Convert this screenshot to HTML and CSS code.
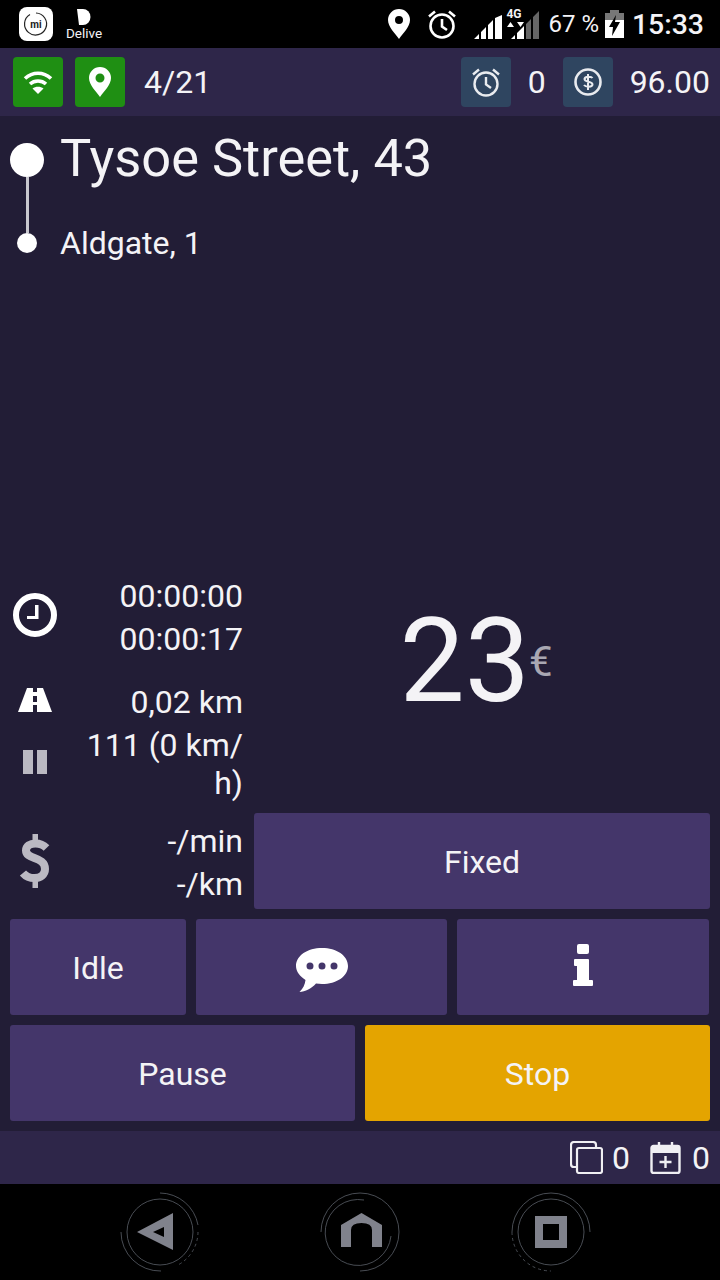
FILE: index.html
```html
<!DOCTYPE html>
<html>
<head>
    <meta charset="UTF-8">
    <title>Taximeter</title>
    <link rel="stylesheet" href="styles.css">
</head>
<body>
    <div class="phone">
        <div class="status-bar">
            <div class="status-left">
                <div class="mi-icon">
                    <svg width="28" height="28" viewBox="0 0 28 28"><path d="M8 4.500A11 11 0 1 0 14 3" fill="none" stroke="#222" stroke-width="1.200"/></svg>
                    <span class="mi-text">mi</span>
                </div>
                <div class="delive">
                    <svg width="14" height="16" viewBox="0 0 14 16"><path d="M0 0h6a7.500 8 0 0 1 0 16H2z" fill="#fff"/></svg>
                    <span>Delive</span>
                </div>
            </div>
            <div class="status-right">
                <svg class="st-pin" width="22" height="30" viewBox="0 0 22 30"><path fill-rule="evenodd" d="M11 0a11 11 0 0 1 11 11c0 7-7 13-11 19C7 24 0 18 0 11A11 11 0 0 1 11 0zm0 7a4 4 0 1 0 0 8 4 4 0 0 0 0-8z" fill="#fff"/></svg>
                <svg class="st-alarm" width="30" height="30" viewBox="0 0 30 30"><g fill="none" stroke="#fff" stroke-width="2.600"><circle cx="15" cy="17" r="11.500"/><path d="M15 10v7.500l5 3.500M2 7.500l6-5M28 7.500l-6-5"/></g></svg>
                <svg class="st-signal" width="28" height="24" viewBox="0 0 28 24"><path d="M0 24l5-5v5zM7 24v-7l5-5v12zM14 24V10l5-5v19zM21 24V3l7-3v24z" fill="#fff"/></svg>
                <div class="net">
                    <span class="net-text">4G</span>
                    <svg width="36" height="36" viewBox="0 0 36 36"><path d="M4 24l3.500-5 3.500 5zM14 19l3.500 5 3.500-5z" fill="#fff"/><path d="M8 36l4-4v4zM14 36v-6l7-7v13z" fill="#fff"/><path d="M23 36V21l5-5v20zM30 36V14l6-6v28z" fill="#666"/></svg>
                </div>
                <span class="battery-text">67 %</span>
                <svg class="st-battery" width="19" height="28" viewBox="0 0 19 28"><path d="M5 0h9v3H5z" fill="#777"/><path d="M0 3h19v7H0z" fill="#777"/><path d="M0 10h19v18H0z" fill="#fff"/><path d="M11 5 4 17h4l-1 9 8-14h-5z" fill="#000"/></svg>
                <span class="clock-text">15:33</span>
            </div>
        </div>

        <div class="top-bar">
            <div class="square-btn green">
                <svg width="30" height="26" viewBox="0 0 30 26"><g fill="none" stroke="#fff" stroke-width="3.600"><path d="M2 9.500c7.500-7 18.500-7 26 0"/><path d="M7 15c4.500-4 11.500-4 16 0"/></g><path d="M15 25l-5.500-5.500c3-2.500 8-2.500 11 0z" fill="#fff"/></svg>
            </div>
            <div class="square-btn green">
                <svg width="22" height="30" viewBox="0 0 22 30"><path fill-rule="evenodd" d="M11 0a11 11 0 0 1 11 11c0 7-7 13-11 19C7 24 0 18 0 11A11 11 0 0 1 11 0zm0 6.500a4.500 4.500 0 1 0 0 9 4.500 4.500 0 0 0 0-9z" fill="#fff"/></svg>
            </div>
            <span class="count">4/21</span>
            <div class="top-right">
                <div class="square-btn slate">
                    <svg width="30" height="30" viewBox="0 0 30 30"><g fill="none" stroke="#e9ebef" stroke-width="2.400"><circle cx="15" cy="17" r="11.500"/><path d="M15 10v7.500l5 3.500M2 7.500l6-5M28 7.500l-6-5"/></g></svg>
                </div>
                <span class="top-num">0</span>
                <div class="square-btn slate">
                    <svg width="30" height="30" viewBox="0 0 30 30"><circle cx="15" cy="15" r="12.500" fill="none" stroke="#e9ebef" stroke-width="2.600"/><path d="M19.500 11c-1-1.500-7.500-2-8 1 0 3.500 8 2 8 5.500 0 3-7 2.500-8.500 .5M15 7v16" fill="none" stroke="#e9ebef" stroke-width="2"/></svg>
                </div>
                <span class="top-num money">96.00</span>
            </div>
        </div>

        <div class="main">
            <div class="route">
                <div class="route-marks">
                    <span class="dot-big"></span>
                    <span class="route-line"></span>
                    <span class="dot-small"></span>
                </div>
                <div class="route-text">
                    <div class="route-from">Tysoe Street, 43</div>
                    <div class="route-to">Aldgate, 1</div>
                </div>
            </div>

            <div class="stats">
                <div class="stats-left">
                    <div class="stat-row">
                        <div class="stat-icon clock-icon">
                            <svg width="46" height="46" viewBox="0 0 46 46"><circle cx="23" cy="23" r="19" fill="none" stroke="#fff" stroke-width="6"/><path d="M23 13h3.500v14H15v-3h8z" fill="#fff"/></svg>
                        </div>
                        <div class="stat-text">
                            <div class="line">00:00:00</div>
                            <div class="line">00:00:17</div>
                        </div>
                    </div>
                    <div class="stat-row road-row">
                        <div class="stat-icon road-icon">
                            <svg width="34" height="24" viewBox="0 0 34 24"><path fill-rule="evenodd" d="M9 0h6v4h4V0h6l9 24H0zM15 8h4v6h-4zM15 17h4v7h-4z" fill="#fff"/></svg>
                        </div>
                        <div class="stat-text">
                            <div class="line">0,02 km</div>
                        </div>
                    </div>
                    <div class="stat-row wait-row">
                        <div class="stat-icon pause-icon">
                            <svg width="26" height="26" viewBox="0 0 26 26"><path d="M1 1h10v24H1zM15 1h10v24H15z" fill="#bbb9c2"/></svg>
                        </div>
                        <div class="stat-text">111 (0 km/<wbr>h)</div>
                    </div>
                    <div class="stat-row rate-row">
                        <div class="stat-icon dollar-icon">
                            <svg width="30" height="54" viewBox="0 0 30 54"><path d="M26.500 14C23 10.500 19.500 9.500 15.500 9.500 10 9.500 6 12 6 16.500 6 26 25 22 25 35 25 40.500 20.500 44 14.500 44 10 44 6 42.500 3 39" fill="none" stroke="#bbb9c2" stroke-width="8"/><path d="M12.500 0h5.500v10h-5.500zM12.500 44h5.500v10h-5.500z" fill="#bbb9c2"/></svg>
                        </div>
                        <div class="stat-text">
                            <div class="line">-/min</div>
                            <div class="line">-/km</div>
                        </div>
                    </div>
                </div>
                <div class="stats-right">
                    <div class="fare"><span class="fare-num">23</span><span class="fare-cur">€</span></div>
                    <div class="btn">Fixed</div>
                </div>
            </div>

            <div class="btn-row three">
                <div class="btn">Idle</div>
                <div class="btn">
                    <svg class="chat-svg" width="54" height="46" viewBox="0 0 54 46"><path fill-rule="evenodd" d="M27 1c14.500 0 26 7.500 26 18S41.500 37 27 37c-2 0-4-.2-6-.5C17 41 10 45 4.500 45 8 41.500 10 37.500 10.500 33 5 29.500 1 24.500 1 19 1 8.500 12.500 1 27 1zM15 15.500a3.500 3.500 0 1 0 0 7 3.500 3.500 0 0 0 0-7zm12 0a3.500 3.500 0 1 0 0 7 3.500 3.500 0 0 0 0-7zm12 0a3.500 3.500 0 1 0 0 7 3.500 3.500 0 0 0 0-7z" fill="#fff"/></svg>
                </div>
                <div class="btn">
                    <svg class="info-svg" width="20" height="42" viewBox="0 0 20 42"><rect x="4" y="0" width="12" height="10" rx="2" fill="#fff"/><path d="M2 15h13q1 0 1 1v20h3q1 0 1 1v4q0 1-1 1H1q-1 0-1-1v-4q0-1 1-1h3V22H2q-1 0-1-1v-5q0-1 1-1z" fill="#fff"/></svg>
                </div>
            </div>
            <div class="btn-row two">
                <div class="btn">Pause</div>
                <div class="btn stop">Stop</div>
            </div>
        </div>

        <div class="bottom-bar">
            <svg class="copy" width="33" height="33" viewBox="0 0 33 33"><g fill="none" stroke="#f0eff3" stroke-width="2.200" stroke-linejoin="round"><path d="M6 26H4q-3 0-3-3V4q0-3 3-3h19q3 0 3 3v2"/><rect x="7" y="7" width="25" height="25" rx="2"/></g></svg>
            <span>0</span>
            <svg class="cal" width="31" height="33" viewBox="0 0 31 33"><g fill="none" stroke="#f0eff3" stroke-width="2.400"><rect x="1.500" y="5" width="28" height="27" rx="2"/><path d="M9 1v7M22 1v7M15.500 15v12M9.500 21h12"/></g><path d="M1 5h29v7H1z" fill="#f0eff3"/></svg>
            <span>0</span>
        </div>

        <div class="nav-bar">
            <svg width="80" height="80" viewBox="0 0 80 80"><g fill="none" stroke="#5a6068" stroke-width=".8"><path d="M40 1a39 39 0 0 1 38 32M1 40a39 39 0 0 0 40 39"/><circle cx="40" cy="40" r="33"/><path d="M78 40a38 38 0 0 1-20 33" stroke-dasharray="3 3"/></g><path fill-rule="evenodd" d="M53 21v37L17 40zM44 35l-11 5 11 5z" fill="#80828c"/></svg>
            <svg width="80" height="80" viewBox="0 0 80 80"><g fill="none" stroke="#5a6068" stroke-width=".8"><path d="M1 40A39 39 0 0 1 40 1a39 39 0 0 1 39 39 39 39 0 0 1-39 39"/><path d="M71 44A33 33 0 1 1 44 8"/></g><path fill-rule="evenodd" d="M41.500 21L62 33v22H52V38q0-7-10.500-7T31 38v17H21V33z" fill="#80828c"/></svg>
            <svg width="80" height="80" viewBox="0 0 80 80"><g fill="none" stroke="#5a6068" stroke-width=".8"><path d="M1 40A39 39 0 0 1 79 40"/><circle cx="40" cy="40" r="33"/><path d="M1 40a39 39 0 0 0 39 39" stroke-dasharray="3 3"/></g><path fill-rule="evenodd" d="M24 24h32v32H24zM32 32v16h16V32z" fill="#80828c"/></svg>
        </div>
    </div>
</body>
</html>
```

FILE: styles.css
```css
body {
    margin: 0;
    padding: 0;
    font-family: Roboto, Arial, sans-serif;
    font-size: 32px;
    color: #f4f3f6;
    background-color: #000;
}

.phone {
    width: 720px;
    height: 1280px;
    display: flex;
    flex-direction: column;
    overflow: hidden;
}

/* status bar */
.status-bar {
    height: 48px;
    flex: none;
    background-color: #000;
    display: flex;
    justify-content: space-between;
    align-items: center;
}

.status-left {
    display: flex;
    align-items: center;
    padding-left: 19px;
}

.mi-icon {
    width: 34px;
    height: 34px;
    border-radius: 8px;
    background-color: #fff;
    display: flex;
    align-items: center;
    justify-content: center;
    position: relative;
}

.mi-text {
    position: absolute;
    font-size: 10px;
    font-weight: 700;
    color: #222;
}

.delive {
    display: flex;
    flex-direction: column;
    align-items: center;
    margin-left: 13px;
    font-size: 13.5px;
    line-height: 14px;
}

.delive svg {
    margin-bottom: 1px;
}

.status-right {
    display: flex;
    align-items: center;
    padding-right: 16px;
}

.st-alarm {
    margin-left: 17px;
}

.st-signal {
    margin-left: 17px;
    margin-top: 6px;
}

.net {
    position: relative;
    width: 36px;
    height: 36px;
    margin-left: 1px;
    margin-top: -6px;
}

.net-text {
    position: absolute;
    top: 5px;
    left: 3px;
    font-size: 12px;
    line-height: 12px;
    font-weight: 700;
}

.battery-text {
    margin-left: 9px;
    font-size: 24px;
}

.st-battery {
    margin-left: 6px;
}

.clock-text {
    margin-left: 8px;
    font-size: 28.4px;
    font-weight: 500;
}

/* top bar */
.top-bar {
    height: 68px;
    flex: none;
    box-sizing: border-box;
    padding: 0 10px 0 13px;
    background-color: #2e2649;
    display: flex;
    align-items: center;
}

.square-btn {
    width: 50px;
    height: 50px;
    border-radius: 4px;
    display: flex;
    align-items: center;
    justify-content: center;
    margin-right: 12px;
}

.green {
    background-color: #1f8f13;
}

.slate {
    background-color: #2f4560;
    margin-right: 0;
}

.count {
    margin-left: 7px;
}

.top-right {
    margin-left: auto;
    display: flex;
    align-items: center;
}

.top-num {
    margin: 0 17px;
}

.top-num.money {
    margin-right: 0;
}

/* main area */
.main {
    flex: 1;
    background-color: #221d36;
    display: flex;
    flex-direction: column;
    padding-bottom: 10px;
}

.route {
    display: flex;
    padding-top: 10px;
}

.route-marks {
    width: 54px;
    display: flex;
    flex-direction: column;
    align-items: center;
    padding-top: 17px;
}

.dot-big {
    width: 34px;
    height: 34px;
    border-radius: 50%;
    background-color: #fff;
}

.route-line {
    width: 3px;
    height: 56px;
    background-color: #c9c8cf;
}

.dot-small {
    width: 20px;
    height: 20px;
    border-radius: 50%;
    background-color: #fff;
}

.route-text {
    margin-left: 6px;
}

.route-from {
    font-size: 52.4px;
    line-height: 64px;
}

.route-to {
    font-size: 32px;
    line-height: 38px;
    margin-top: 34px;
}

.stats {
    margin-top: auto;
    display: flex;
}

.stats-left {
    width: 254px;
    flex: none;
}

.stat-row {
    display: flex;
    align-items: center;
}

.stat-icon {
    width: 70px;
    flex: none;
    display: flex;
    justify-content: center;
}

.clock-icon {
    margin-bottom: 6px;
}

.road-icon {
    margin-bottom: 6px;
}

.pause-icon {
    margin-bottom: 4px;
}

.dollar-icon {
    margin-bottom: 4px;
}

.stat-text {
    flex: 1;
    text-align: right;
    padding-right: 11px;
    line-height: 38px;
}

.line {
    height: 43px;
    line-height: 43px;
}

.road-row {
    margin-top: 20px;
}

.wait-row {
    margin-top: 2px;
}

.rate-row {
    margin-top: 18px;
    padding-bottom: 3px;
}

.stats-right {
    flex: 1;
    display: flex;
    flex-direction: column;
    padding-right: 10px;
}

.fare {
    flex: 1;
    display: flex;
    align-items: center;
    justify-content: center;
    padding: 0 12px 66px 0;
}

.fare-num {
    font-size: 116px;
}

.fare-cur {
    font-size: 42px;
    color: #a9a7b2;
    margin-left: -1px;
}

.btn {
    height: 96px;
    box-sizing: border-box;
    padding-top: 2px;
    border-radius: 3px;
    background-color: #44366a;
    display: flex;
    align-items: center;
    justify-content: center;
    flex: none;
}

.chat-svg {
    margin-top: 4px;
}

.info-svg {
    margin-bottom: 6px;
}

.btn-row {
    display: grid;
    gap: 10px;
    margin: 10px 10px 0;
}

.three {
    grid-template-columns: 176px 251px 252px;
    margin-right: 11px;
}

.two {
    grid-template-columns: 1fr 1fr;
}

.btn.stop {
    background-color: #e4a400;
}

/* bottom bar */
.bottom-bar {
    height: 53px;
    flex: none;
    box-sizing: border-box;
    padding-right: 10px;
    background-color: #2e2649;
    display: flex;
    align-items: center;
    justify-content: flex-end;
}

.copy {
    margin-right: 9px;
}

.cal {
    margin: 0 11px 0 20px;
}

/* nav */
.nav-bar {
    height: 96px;
    flex: none;
    background-color: #000;
    display: grid;
    grid-template-columns: 200px 191px 80px;
    padding-left: 120px;
    align-items: center;
}
```
